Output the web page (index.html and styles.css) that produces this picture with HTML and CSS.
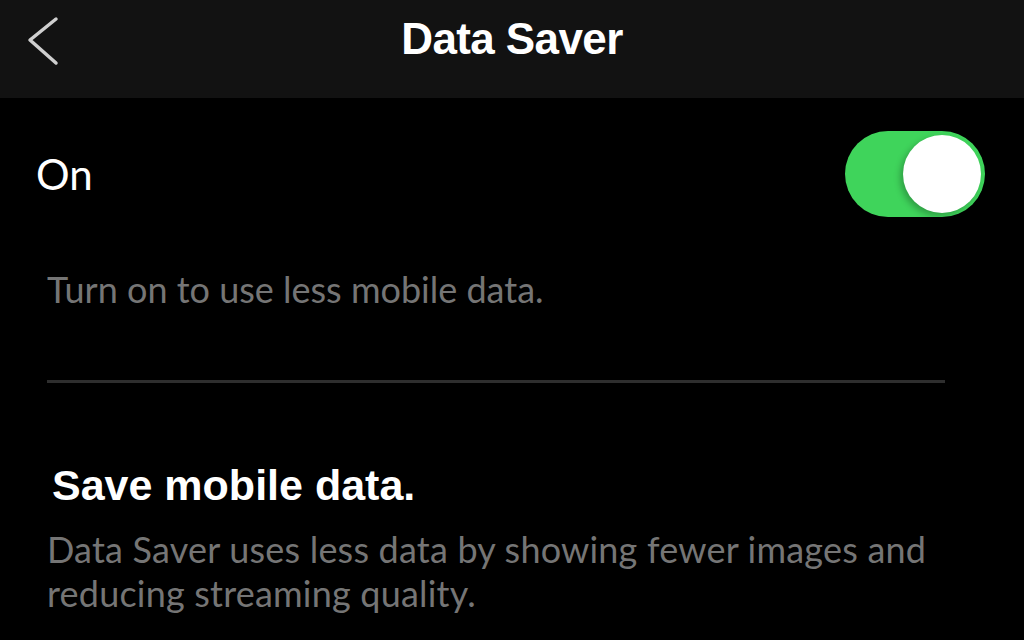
FILE: index.html
```html
<!DOCTYPE html>
<html lang="en">
<head>
    <meta charset="UTF-8">
    <meta name="viewport" content="width=device-width, initial-scale=1.0">
    <title>Data Saver</title>
    <link rel="stylesheet" href="styles.css">
</head>
<body>
    <header class="topbar">
        <button class="back" aria-label="Back">
            <svg width="34" height="52" viewBox="0 0 34 52">
                <path d="M30 3 L4 24 L30 47" fill="none" stroke="#cfcfcf" stroke-width="3.5" stroke-linecap="round" stroke-linejoin="round"/>
            </svg>
        </button>
        <h1 class="title">Data Saver</h1>
        <span></span>
    </header>

    <main class="content">
        <div class="row">
            <span class="row-label">On</span>
            <div class="toggle on"><div class="knob"></div></div>
        </div>
        <p class="hint">Turn on to use less mobile data.</p>
        <hr class="divider">
        <h2 class="section-title">Save mobile data.</h2>
        <p class="section-text">Data Saver uses less data by showing fewer images and reducing streaming quality.</p>
    </main>
</body>
</html>
```

FILE: styles.css
```css
body {
    margin: 0;
    background: #000;
    color: #fff;
    font-family: Lato, "Noto Sans", sans-serif;
    overflow: hidden;
}
.topbar {
    height: 98px;
    background: #121212;
    display: grid;
    grid-template-columns: 1fr auto 1fr;
    align-items: center;
}
.back {
    background: none;
    border: none;
    padding: 0 0 14px 26px;
    justify-self: start;
    display: flex;
}
.title {
    margin: 0 0 20px 0;
    font-family: "Liberation Sans", Arial, sans-serif;
    font-size: 44px;
    font-weight: bold;
    letter-spacing: -0.6px;
}
.content {
    padding: 0 39px 0 47px;
}
.row {
    display: flex;
    justify-content: space-between;
    align-items: center;
    margin-top: 33px;
}
.row-label {
    margin-left: -11px;
    font-size: 42px;
}
.toggle {
    width: 140px;
    height: 86px;
    border-radius: 43px;
    background: #3fd45b;
    position: relative;
}
.toggle .knob {
    position: absolute;
    top: 4px;
    right: 4px;
    width: 78px;
    height: 78px;
    border-radius: 50%;
    background: #fff;
    box-shadow: -3px 3px 6px rgba(0, 0, 0, 0.25);
}
.hint {
    margin: 50px 0 0 0;
    font-size: 36px;
    line-height: 44px;
    color: #757575;
}
.divider {
    border: none;
    height: 3px;
    background: #2e2e2e;
    margin: 69px 40px 0 0;
}
.section-title {
    margin: 77px 0 0 5px;
    font-family: "Liberation Sans", Arial, sans-serif;
    font-size: 43px;
    line-height: 50px;
    font-weight: bold;
}
.section-text {
    margin: 17px 0 0 0;
    font-size: 36px;
    line-height: 44px;
    letter-spacing: 0.2px;
    color: #757575;
}
```
